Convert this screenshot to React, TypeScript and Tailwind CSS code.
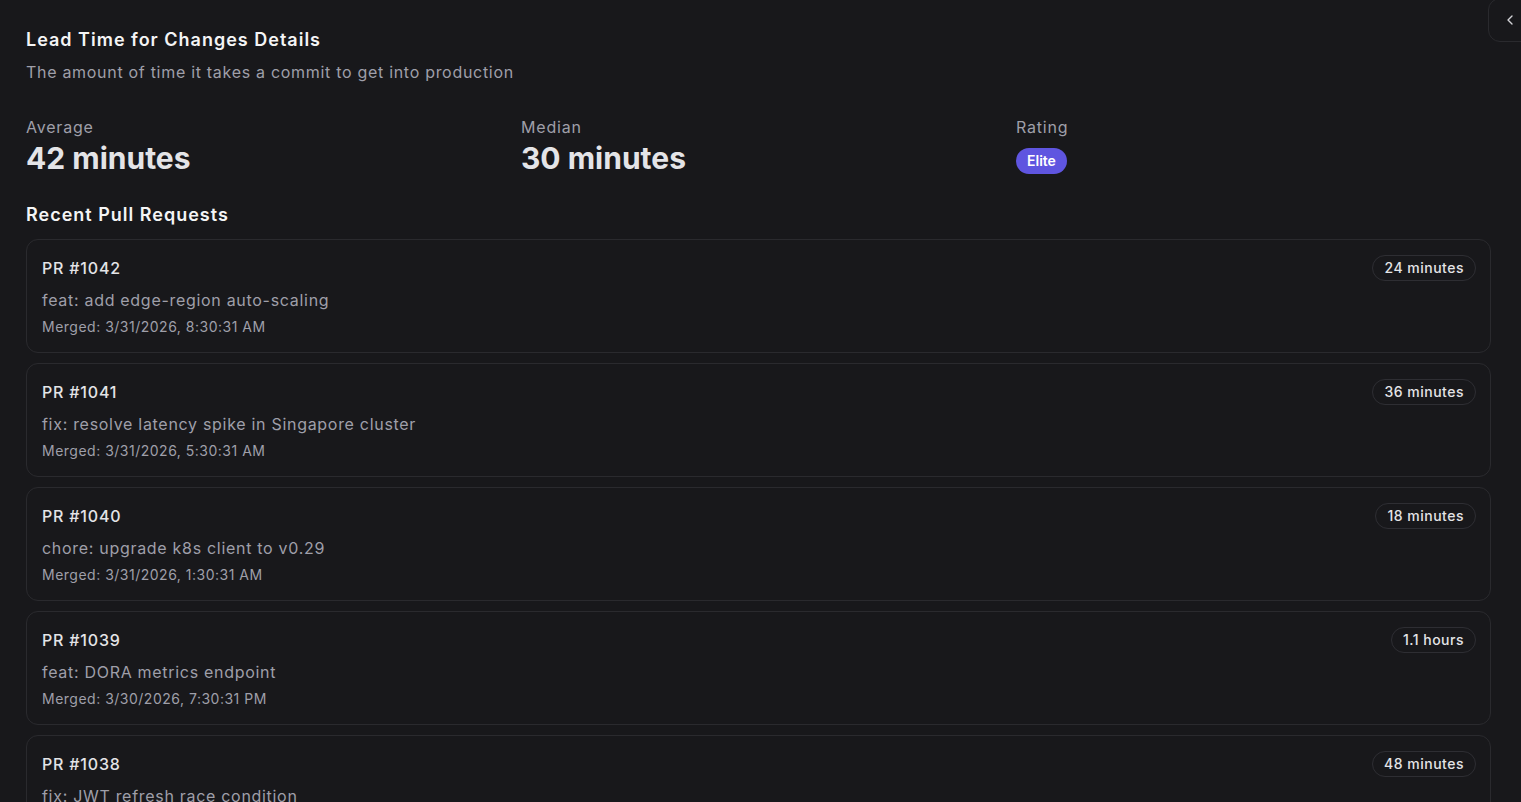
import { ChevronLeft } from "lucide-react";

interface PullRequest {
  number: number;
  title: string;
  mergedAt: string;
  leadTime: string;
}

const pullRequests: PullRequest[] = [
  { number: 1042, title: "feat: add edge-region auto-scaling", mergedAt: "3/31/2026, 8:30:31 AM", leadTime: "24 minutes" },
  { number: 1041, title: "fix: resolve latency spike in Singapore cluster", mergedAt: "3/31/2026, 5:30:31 AM", leadTime: "36 minutes" },
  { number: 1040, title: "chore: upgrade k8s client to v0.29", mergedAt: "3/31/2026, 1:30:31 AM", leadTime: "18 minutes" },
  { number: 1039, title: "feat: DORA metrics endpoint", mergedAt: "3/30/2026, 7:30:31 PM", leadTime: "1.1 hours" },
  { number: 1038, title: "fix: JWT refresh race condition", mergedAt: "3/30/2026, 2:30:31 PM", leadTime: "48 minutes" },
];

export default function App() {
  return (
    <div
      className="relative min-h-screen overflow-hidden bg-[#18181b] text-zinc-200"
      style={{ fontFamily: "Inter, 'Noto Sans', sans-serif" }}
    >
      <button className="absolute -top-[2px] -right-[14px] flex h-[44px] w-[47px] items-center pl-[13px] rounded-xl border border-[#2a2a2e] bg-[#18181b] text-zinc-300">
        <ChevronLeft size={16} strokeWidth={2} />
      </button>

      <div className="pl-[26px] pr-[30px] pt-[26px]">
        <h2 className="text-lg leading-7 font-semibold tracking-[1px] text-zinc-100">Lead Time for Changes Details</h2>
        <p className="mt-[6px] text-base leading-6 tracking-[0.7px] text-zinc-400">
          The amount of time it takes a commit to get into production
        </p>

        <div className="mt-[31px] grid grid-cols-3 gap-5">
          <div>
            <p className="text-base leading-6 tracking-[0.8px] text-zinc-400">Average</p>
            <p className="mt-px text-3xl leading-9 font-bold text-zinc-200">42 minutes</p>
          </div>
          <div>
            <p className="text-base leading-6 tracking-[0.8px] text-zinc-400">Median</p>
            <p className="mt-px text-3xl leading-9 font-bold text-zinc-200">30 minutes</p>
          </div>
          <div>
            <p className="text-base leading-6 tracking-[0.8px] text-zinc-400">Rating</p>
            <span className="mt-[9px] inline-flex h-[26px] items-center rounded-full bg-[#5f55e0] px-[11px] text-sm font-semibold text-white">
              Elite
            </span>
          </div>
        </div>

        <h3 className="mt-[25px] text-lg leading-7 font-semibold tracking-[1px] text-zinc-100">Recent Pull Requests</h3>

        <div className="mt-[10px] flex flex-col gap-[10px]">
          {pullRequests.map((pr) => (
            <div key={pr.number} className="rounded-xl border border-[#2a2a2e] pl-[15px] pr-[14px] py-[15px]">
              <div className="flex h-[26px] items-center justify-between">
                <span className="text-base font-medium tracking-[0.8px] text-zinc-200">PR #{pr.number}</span>
                <span className="inline-flex h-[26px] items-center rounded-full border border-[#2e2e33] px-[11px] text-sm font-medium tracking-[0.5px] text-zinc-200">
                  {pr.leadTime}
                </span>
              </div>
              <p className="mt-[7px] text-base leading-6 tracking-[0.7px] text-zinc-400">{pr.title}</p>
              <p className="mt-[5px] text-sm leading-5 tracking-[0.5px] text-zinc-400">Merged: {pr.mergedAt}</p>
            </div>
          ))}
        </div>
      </div>
    </div>
  );
}
